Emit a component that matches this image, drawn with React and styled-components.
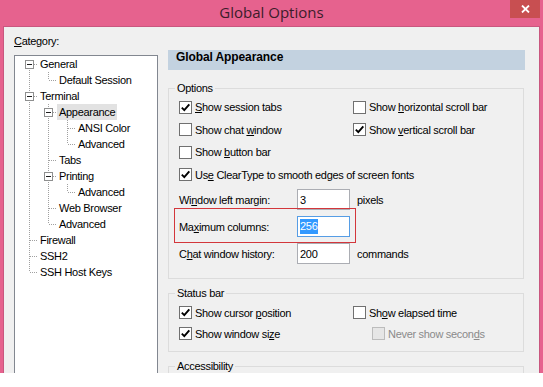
import React from 'react';
import styled, { createGlobalStyle } from 'styled-components';

const GlobalStyle = createGlobalStyle`
  html, body { margin: 0; padding: 0; background: #ffffff; }
  body {
    font-family: "Liberation Sans", Arial, sans-serif;
    font-size: 11px;
    letter-spacing: -0.3px;
    color: #000;
  }
  *, *::before, *::after { box-sizing: border-box; }
`;

const Window = styled.div`
  width: 543px;
  height: 373px;
  background: #e6628e;
  display: flex;
  flex-direction: column;
  overflow: hidden;
`;

const TitleBar = styled.header`
  flex: none;
  height: 26px;
  display: grid;
  grid-template-columns: 1fr auto 1fr;
  align-items: start;
`;

const Title = styled.h1`
  grid-column: 2;
  margin: 0;
  font: 400 15px/24px "Open Sans", "Noto Sans", sans-serif;
  letter-spacing: 0;
  color: #3c1c2a;
`;

const CloseButton = styled.div`
  grid-column: 3;
  justify-self: end;
  margin-right: 3px;
  width: 30px;
  height: 18px;
  background: #c84f51;
  display: flex;
  align-items: center;
  justify-content: center;
`;

const Body = styled.main`
  flex: 1;
  min-height: 0;
  margin: 0 3px;
  background: #f0f0f0;
  border: 1px solid #c9577f;
  border-bottom: none;
  display: grid;
  grid-template-columns: 154px 1fr;
  overflow: hidden;
`;

const Sidebar = styled.section`
  padding: 7px 0 0 10px;
  display: flex;
  flex-direction: column;
  min-height: 0;
`;

const Caption = styled.div`
  height: 14px;
  line-height: 14px;
  margin-bottom: 7px;
`;

const TreeBox = styled.div`
  width: 144px;
  flex: 1;
  background: #fff;
  border: 1px solid #828790;
  border-bottom: none;
  padding-left: 6px;
`;

const TreeRow = styled.div`
  display: flex;
  align-items: center;
  height: 16px;
  white-space: nowrap;
`;

const TreeText = styled.span`
  padding: 0 2px;
  line-height: 16px;
  background: ${p => (p.$selected ? '#e2e2e2' : 'transparent')};
`;

const Mnemonic = styled.u`
  text-decoration: underline;
  text-underline-offset: 1px;
`;

const Content = styled.section`
  padding: 23px 14px 0 10px;
  display: flex;
  flex-direction: column;
  min-width: 0;
`;

const PageHeader = styled.h2`
  margin: 0;
  height: 20px;
  line-height: 20px;
  padding-left: 8px;
  background: #c3d2e0;
  font: 700 12px "Liberation Sans", Arial, sans-serif;
  letter-spacing: -0.1px;
`;

const Group = styled.fieldset`
  margin: ${p => p.$gap}px 1px 0 0;
  border: 1px solid #dcdcdc;
  padding: 0 0 ${p => p.$bottom || 0}px 6px;
  min-width: 0;
  flex: none;
  ${p => (p.$height ? `height: ${p.$height}px;` : '')}
`;

const Legend = styled.legend`
  padding: 0 2px;
  line-height: 14px;
`;

const CheckGrid = styled.div`
  display: grid;
  grid-template-columns: 174px 1fr;
  grid-template-rows: ${p => p.$rows};
  padding-top: ${p => p.$top}px;
  margin-left: 4px;
  align-items: center;
`;

const Wide = styled.div`
  grid-column: 1 / -1;
`;

const CheckLabel = styled.label`
  display: flex;
  align-items: center;
  gap: 3px;
  line-height: 14px;
  color: ${p => (p.$disabled ? '#8a8a8a' : '#000')};
  margin-left: ${p => p.$indent || 0}px;
`;

const Box = styled.span`
  flex: none;
  width: 13px;
  height: 13px;
  border: 1px solid ${p => (p.$disabled ? '#bcbcbc' : '#707070')};
  background: ${p => (p.$disabled ? '#e6e6e6' : '#fff')};
  display: flex;
  align-items: center;
  justify-content: center;
`;

const FieldList = styled.div`
  display: flex;
  flex-direction: column;
  gap: 6px;
  margin: 3px 0 0 4px;
`;

const FieldRow = styled.div`
  position: relative;
  display: flex;
  align-items: center;
  width: max-content;
  height: 21px;

  ${p =>
    p.$marked
      ? `&::after {
          content: "";
          position: absolute;
          top: -8px; left: -5px; right: -6px; bottom: -6px;
          border: 1px solid #d3363b;
          pointer-events: none;
        }`
      : ''}
`;

const FieldLabel = styled.span`
  width: 118px;
`;

const TextBox = styled.div`
  width: 53px;
  height: 21px;
  background: #fff;
  border: 1px solid ${p => (p.$focused ? '#569de5' : '#abadb3')};
  padding-left: 2px;
  display: flex;
  align-items: center;
`;

const Selection = styled.span`
  background: #3399ff;
  color: #fff;
  line-height: 15px;
  padding-right: 1px;
`;

const Suffix = styled.span`
  margin-left: 7px;
`;

const treeRows = [
  { label: 'General', guides: [], expander: true, up: false, down: true },
  { label: 'Default Session', guides: [true], up: true, down: false },
  { label: 'Terminal', guides: [], expander: true, up: true, down: true },
  { label: 'Appearance', guides: [true], expander: true, up: true, down: true, selected: true },
  { label: 'ANSI Color', guides: [true, true], up: true, down: true },
  { label: 'Advanced', guides: [true, true], up: true, down: false },
  { label: 'Tabs', guides: [true], up: true, down: true },
  { label: 'Printing', guides: [true], expander: true, up: true, down: true },
  { label: 'Advanced', guides: [true, true], up: true, down: false },
  { label: 'Web Browser', guides: [true], up: true, down: true },
  { label: 'Advanced', guides: [true], up: true, down: false },
  { label: 'Firewall', guides: [], up: true, down: true },
  { label: 'SSH2', guides: [], up: true, down: true },
  { label: 'SSH Host Keys', guides: [], up: true, down: false },
];

const DOT = { stroke: '#a0a0a0', strokeWidth: 1, strokeDasharray: '1 1', shapeRendering: 'crispEdges' };

function Guide({ on }) {
  return (
    <svg width="19" height="16" style={{ flex: 'none', display: 'block' }}>
      {on && <line x1="8.5" y1="0" x2="8.5" y2="16" {...DOT} />}
    </svg>
  );
}

function Connector({ up, down, expander }) {
  return (
    <svg width="17" height="16" style={{ flex: 'none', display: 'block' }}>
      {up && <line x1="8.5" y1="0" x2="8.5" y2="8" {...DOT} />}
      {down && <line x1="8.5" y1="8" x2="8.5" y2="16" {...DOT} />}
      <line x1="9" y1="8.5" x2="17" y2="8.5" {...DOT} />
      {expander && (
        <g shapeRendering="crispEdges">
          <rect x="4.5" y="4.5" width="8" height="8" fill="#fff" stroke="#8e8f8f" />
          <line x1="6" y1="8.5" x2="11" y2="8.5" stroke="#1e1e1e" />
        </g>
      )}
    </svg>
  );
}

function Check({ checked, disabled, indent, children }) {
  return (
    <CheckLabel $disabled={disabled} $indent={indent}>
      <Box $disabled={disabled}>
        {checked && (
          <svg width="11" height="11" viewBox="0 0 11 11">
            <path d="M1.8 5.6 L4.3 8.1 L9.3 2.4" fill="none" stroke="#000" strokeWidth="1.9" />
          </svg>
        )}
      </Box>
      <span>{children}</span>
    </CheckLabel>
  );
}

export default function App() {
  return (
    <>
      <GlobalStyle />
      <Window>
        <TitleBar>
          <Title>Global Options</Title>
          <CloseButton>
            <svg width="9" height="8" viewBox="0 0 9 8">
              <path d="M1 0.5 L8 7.5 M8 0.5 L1 7.5" stroke="#fff" strokeWidth="1.8" />
            </svg>
          </CloseButton>
        </TitleBar>
        <Body>
          <Sidebar>
            <Caption>
              <Mnemonic>C</Mnemonic>ategory:
            </Caption>
            <TreeBox>
              {treeRows.map((r, i) => (
                <TreeRow key={i}>
                  {r.guides.map((g, j) => (
                    <Guide key={j} on={g} />
                  ))}
                  <Connector up={r.up} down={r.down} expander={r.expander} />
                  <TreeText $selected={r.selected}>{r.label}</TreeText>
                </TreeRow>
              ))}
            </TreeBox>
          </Sidebar>

          <Content>
            <PageHeader>Global Appearance</PageHeader>

            <Group $gap={11} $bottom={14}>
              <Legend>Options</Legend>
              <CheckGrid $rows="22px 23px 22px 23px" $top={1}>
                <Check checked>
                  <Mnemonic>S</Mnemonic>how session tabs
                </Check>
                <Check>
                  Show <Mnemonic>h</Mnemonic>orizontal scroll bar
                </Check>
                <Check>
                  Show chat <Mnemonic>w</Mnemonic>indow
                </Check>
                <Check checked>
                  Show <Mnemonic>v</Mnemonic>ertical scroll bar
                </Check>
                <Wide>
                  <Check>
                    Show <Mnemonic>b</Mnemonic>utton bar
                  </Check>
                </Wide>
                <Wide>
                  <Check checked>
                    Us<Mnemonic>e</Mnemonic> ClearType to smooth edges of screen fonts
                  </Check>
                </Wide>
              </CheckGrid>
              <FieldList>
                <FieldRow>
                  <FieldLabel>
                    Wi<Mnemonic>n</Mnemonic>dow left margin:
                  </FieldLabel>
                  <TextBox>3</TextBox>
                  <Suffix>pixels</Suffix>
                </FieldRow>
                <FieldRow $marked>
                  <FieldLabel>
                    Ma<Mnemonic>x</Mnemonic>imum columns:
                  </FieldLabel>
                  <TextBox $focused>
                    <Selection>256</Selection>
                  </TextBox>
                </FieldRow>
                <FieldRow>
                  <FieldLabel>
                    C<Mnemonic>h</Mnemonic>at window history:
                  </FieldLabel>
                  <TextBox>200</TextBox>
                  <Suffix>commands</Suffix>
                </FieldRow>
              </FieldList>
            </Group>

            <Group $gap={7} $bottom={7}>
              <Legend>Status bar</Legend>
              <CheckGrid $rows="21px 21px" $top={2}>
                <Check checked>
                  Show cursor <Mnemonic>p</Mnemonic>osition
                </Check>
                <Check>
                  Sh<Mnemonic>o</Mnemonic>w elapsed time
                </Check>
                <Check checked>
                  Show window si<Mnemonic>z</Mnemonic>e
                </Check>
                <Check disabled indent={19}>
                  Never show secon<Mnemonic>d</Mnemonic>s
                </Check>
              </CheckGrid>
            </Group>

            <Group $gap={7} $height={40}>
              <Legend>Accessibility</Legend>
            </Group>
          </Content>
        </Body>
      </Window>
    </>
  );
}
